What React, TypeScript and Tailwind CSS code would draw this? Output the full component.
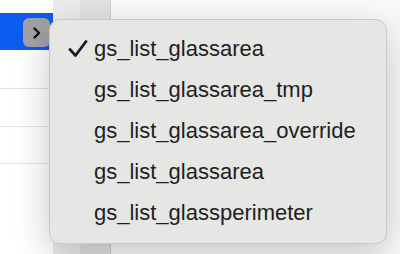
import { FC } from "react";

const items = [
  "gs_list_glassarea",
  "gs_list_glassarea_tmp",
  "gs_list_glassarea_override",
  "gs_list_glassarea",
  "gs_list_glassperimeter",
];

const CheckIcon: FC = () => (
  <svg width="20" height="18" viewBox="0 0 20 18" fill="none">
    <path
      d="M2 9.5 L7.5 15.5 L18 1.5"
      stroke="#1d1d1d"
      strokeWidth="2.8"
      strokeLinecap="round"
      strokeLinejoin="round"
    />
  </svg>
);

const App: FC = () => {
  return (
    <div
      className="relative w-[400px] h-[254px] overflow-hidden bg-white flex"
      style={{ fontFamily: '"Liberation Sans", Arial, sans-serif' }}
    >
      {/* table column behind */}
      <div className="w-[53px] shrink-0 flex flex-col">
        <div className="h-[13px]" />
        <div className="h-[37px] bg-[#0b5cef] flex items-start pt-[5px] pl-[23px]">
          <div className="w-[27px] h-[29px] rounded-[6px] bg-[#a2a2a4] flex items-center justify-center">
            <svg width="10" height="12" viewBox="0 0 10 12" fill="none">
              <path
                d="M2.5 1.5 L7 6 L2.5 10.5"
                stroke="#111"
                strokeWidth="2.4"
                strokeLinecap="round"
                strokeLinejoin="round"
              />
            </svg>
          </div>
        </div>
        <div className="h-[39px] border-b border-[#e2e2e2]" />
        <div className="h-[38px] border-b border-[#e2e2e2]" />
        <div className="h-[37px] border-b border-[#e2e2e2]" />
      </div>
      <div className="w-[27px] shrink-0 bg-[#ececec]" />
      <div className="w-[31px] shrink-0 bg-[#e3e3e3] border-r border-[#d0d0d0]" />
      <div className="flex-1 bg-[#fafafa]" />

      {/* popup menu */}
      <div className="absolute left-[49px] top-[19px] w-[338px] h-[225px] rounded-[11px] bg-[#e6e6e5] border border-[#c9c9c9] shadow-[0_10px_36px_rgba(0,0,0,0.22)] py-[8px]">
        {items.map((name, i) => (
          <div key={i} className="h-[41px] flex items-center text-[22px] text-[#1e1e1e]">
            <div className="w-[44px] pl-[18px] flex items-center">
              {i === 0 && <CheckIcon />}
            </div>
            <span className="leading-none">{name}</span>
          </div>
        ))}
      </div>
    </div>
  );
};

export default App;
